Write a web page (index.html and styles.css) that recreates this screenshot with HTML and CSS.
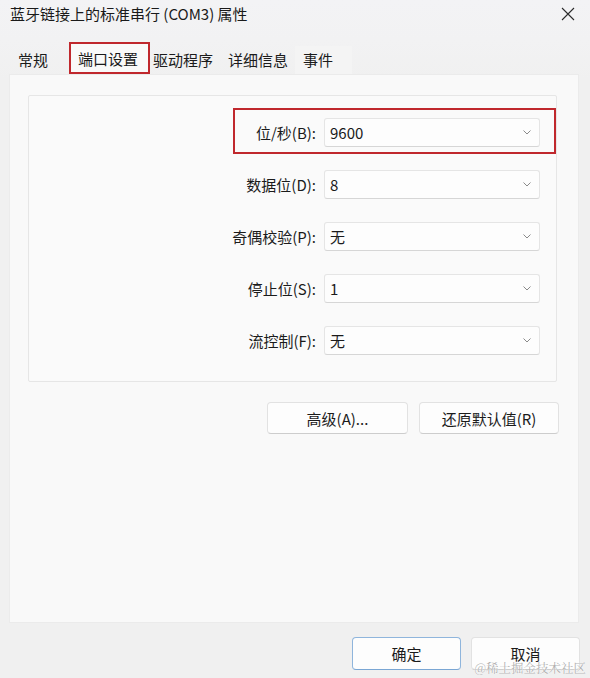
FILE: index.html
```html
<!DOCTYPE html>
<html lang="zh-CN">
<head>
<meta charset="utf-8">
<title>蓝牙链接上的标准串行 (COM3) 属性</title>
<link rel="stylesheet" href="styles.css">
</head>
<body>
<div class="window">
  <div class="titlebar">
    <span class="title">蓝牙链接上的标准串行 (COM3) 属性</span>
    <span class="close" aria-label="关闭">
      <svg width="14" height="14" viewBox="0 0 14 14"><path d="M1 1 L13 13 M13 1 L1 13" stroke="#2b2b2b" stroke-width="1.1" fill="none"/></svg>
    </span>
  </div>
  <div class="tabs">
    <div class="tab tab-first">常规</div>
    <div class="tab tab-selected">端口设置</div>
    <div class="tab tab-after">驱动程序</div>
    <div class="tab">详细信息</div>
    <div class="tab tab-last">事件</div>
  </div>
  <div class="panel">
    <div class="group">
      <div class="highlight"></div>
      <div class="row">
        <label class="label">位/秒(B):</label>
        <div class="select"><span>9600</span><svg class="chev" width="8" height="5" viewBox="0 0 8 5"><path d="M0.5 0.5 L4 4 L7.5 0.5" stroke="#8a8a8a" stroke-width="1" fill="none"/></svg></div>
      </div>
      <div class="row">
        <label class="label">数据位(D):</label>
        <div class="select"><span>8</span><svg class="chev" width="8" height="5" viewBox="0 0 8 5"><path d="M0.5 0.5 L4 4 L7.5 0.5" stroke="#8a8a8a" stroke-width="1" fill="none"/></svg></div>
      </div>
      <div class="row">
        <label class="label">奇偶校验(P):</label>
        <div class="select"><span>无</span><svg class="chev" width="8" height="5" viewBox="0 0 8 5"><path d="M0.5 0.5 L4 4 L7.5 0.5" stroke="#8a8a8a" stroke-width="1" fill="none"/></svg></div>
      </div>
      <div class="row">
        <label class="label">停止位(S):</label>
        <div class="select"><span>1</span><svg class="chev" width="8" height="5" viewBox="0 0 8 5"><path d="M0.5 0.5 L4 4 L7.5 0.5" stroke="#8a8a8a" stroke-width="1" fill="none"/></svg></div>
      </div>
      <div class="row">
        <label class="label">流控制(F):</label>
        <div class="select"><span>无</span><svg class="chev" width="8" height="5" viewBox="0 0 8 5"><path d="M0.5 0.5 L4 4 L7.5 0.5" stroke="#8a8a8a" stroke-width="1" fill="none"/></svg></div>
      </div>
    </div>
    <div class="actions">
      <button class="btn btn-wide">高级(A)...</button>
      <button class="btn btn-wide">还原默认值(R)</button>
    </div>
  </div>
  <div class="footer">
    <button class="btn btn-dialog btn-default">确定</button>
    <button class="btn btn-dialog">取消</button>
  </div>
  <div class="watermark">@稀土掘金技术社区</div>
</div>
</body>
</html>
```

FILE: styles.css
```css
* { box-sizing: border-box; }

html, body {
  margin: 0;
  padding: 0;
}

body {
  width: 590px;
  height: 678px;
  overflow: hidden;
  background: #f0f0f0;
  font-family: "Noto Sans CJK SC", "Noto Sans", sans-serif;
  font-size: 15px;
  color: #1b1b1b;
}

.window {
  position: relative;
  width: 590px;
  height: 678px;
  background: linear-gradient(#f3f3f5 0px, #f2f2f3 40px, #f0f0f0 80px);
}

.titlebar {
  height: 28px;
  display: flex;
  align-items: center;
  justify-content: space-between;
  padding: 0 15px 0 10px;
}

.title {
  font-size: 15px;
  line-height: 28px;
  color: #1a1a1a;
}

.close {
  display: flex;
  width: 14px;
  height: 14px;
}

.tabs {
  display: flex;
  align-items: flex-end;
  height: 32px;
  margin-top: 14px;
  padding-left: 10px;
}

.tab {
  height: 28px;
  line-height: 27px;
  padding: 0 7px 0 8px;
  white-space: nowrap;
  color: #1b1b1b;
}

.tab-first {
  margin-right: 14px;
}

.tab-selected {
  height: 32px;
  line-height: 30px;
  padding: 0 10px 0 7px;
  border: 2px solid #c0282d;
  background: #f9f9f9;
}

.tab-after {
  padding-left: 3px;
}

.tab-last {
  padding-right: 19px;
  background: #f4f4f4;
}

.panel {
  height: 549px;
  margin: 0 11px 0 9px;
  background: #f9f9f9;
  border: 1px solid #ebebeb;
  padding: 20px 21px 0 18px;
}

.group {
  position: relative;
  width: 529px;
  height: 287px;
  border: 1px solid #e6e6e6;
  border-radius: 2px;
  background: #fafafa;
  padding-top: 22px;
  display: flex;
  flex-direction: column;
  gap: 23px;
}

.highlight {
  position: absolute;
  left: 204px;
  top: 12px;
  width: 323px;
  height: 46px;
  border: 2px solid #c0282d;
}

.row {
  display: flex;
  align-items: center;
  height: 29px;
}

.label {
  width: 288px;
  text-align: right;
  padding-right: 1px;
  white-space: nowrap;
}

.select {
  margin-left: 7px;
  width: 216px;
  height: 29px;
  display: flex;
  align-items: center;
  justify-content: space-between;
  padding: 0 8px 0 5px;
  background: #fdfdfd;
  border: 1px solid #e5e5e5;
  border-bottom-color: #d6d6d6;
  border-radius: 3px;
}

.select span {
  line-height: 27px;
}

.chev {
  display: block;
}

.actions {
  display: flex;
  justify-content: flex-end;
  gap: 11px;
  margin-top: 20px;
  margin-right: -2px;
}

.btn {
  font-family: "Noto Sans CJK SC", "Noto Sans", sans-serif;
  font-size: 15px;
  color: #1b1b1b;
  background: #fdfdfd;
  border: 1px solid #e2e2e2;
  border-bottom-color: #cdcdcd;
  border-radius: 4px;
  padding: 0;
  margin: 0;
}

.btn-wide {
  width: 141px;
  height: 32px;
}

.btn-wide + .btn-wide {
  width: 140px;
}

.footer {
  display: flex;
  justify-content: flex-end;
  gap: 10px;
  padding: 14px 10px 0 0;
}

.btn-dialog {
  width: 109px;
  height: 33px;
}

.btn-default {
  border-color: #8fb5dc;
  border-bottom-color: #7aa6d4;
}

.watermark {
  position: absolute;
  right: 4px;
  bottom: 3px;
  font-family: "Noto Serif CJK SC", "Noto Sans CJK SC", serif;
  font-size: 12.5px;
  line-height: 14px;
  color: rgba(150, 150, 150, 0.75);
  text-shadow: 0 0 1px #fff, 0 0 1px #fff;
  white-space: nowrap;
}
```
